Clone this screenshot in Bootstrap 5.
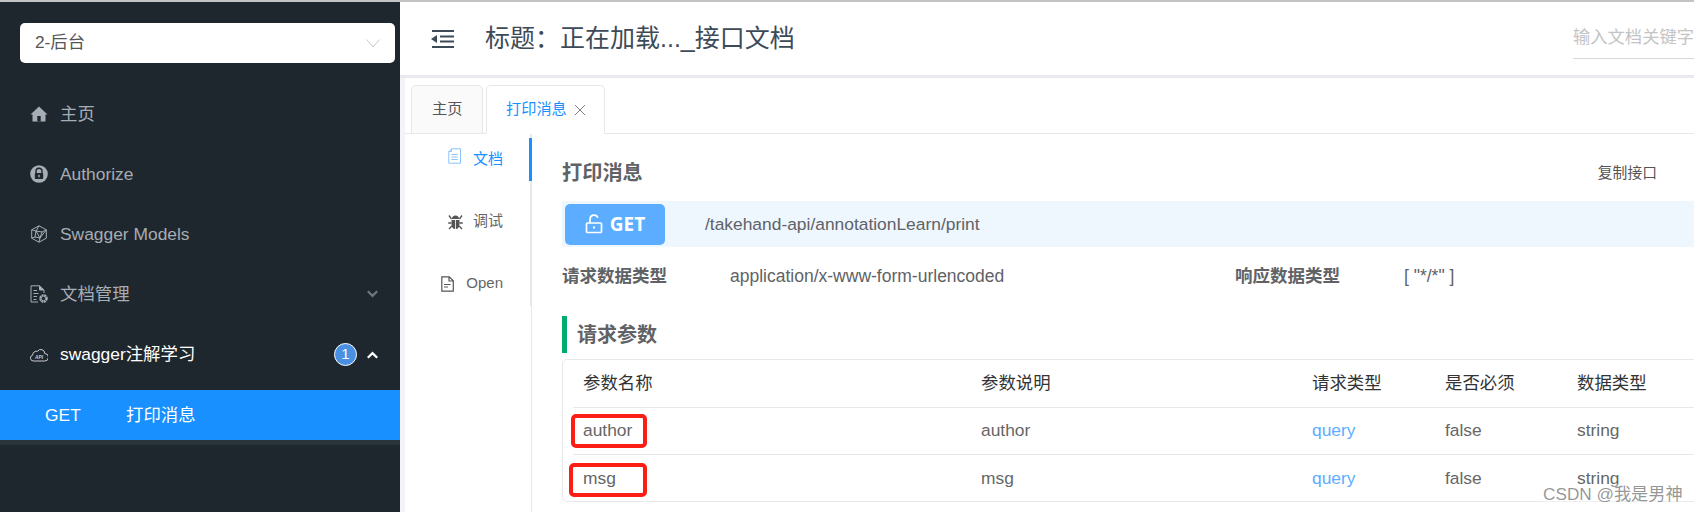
<!DOCTYPE html>
<html lang="zh-CN">
<head>
<meta charset="utf-8">
<title>接口文档</title>
<link rel="stylesheet" href="https://cdn.jsdelivr.net/npm/bootstrap@5.3.0/dist/css/bootstrap.min.css">
<style>
html,body{height:100%;margin:0}
body{font-family:"Liberation Sans","Noto Sans CJK SC",sans-serif;overflow:hidden;background:#fff;color:#606266}
.shell{height:512px;border-top:2px solid #c4c4c4;position:relative;overflow:hidden}
.side{width:400px;flex:none;background:#1f272e}
.picker{margin:21px 5px 0 20px;height:40px;padding:0 15px;background:#fff;border-radius:5px;color:#555;font-size:17.3px}
.menu-list{margin-top:21px}
.side-item{height:60px;padding:0 22px 0 30px;color:#a6adb4;font-size:17.4px;gap:12px}
.side-item svg.ico{width:18px;height:18px;flex:none}
.side-item.open{color:#fff;height:66px;padding-bottom:5px}
.count{width:23px;height:23px;border-radius:50%;background:#4a90e2;border:1.5px solid #fff;color:#fff;font-size:15px;margin-right:-2px}
.sub-item{height:50px;background:#1890ff;color:#fff;font-size:17.4px;padding-left:45px;box-shadow:0 5px 0 #2a343b}
.sub-item span:first-child{width:81px}
.work{min-width:0;overflow:hidden}
.top-bar{height:73px;flex:none;padding-left:31px}
.top-bar h1{font-size:25px;font-weight:400;color:#3d4a58;margin:0 0 0 31px;line-height:1;white-space:nowrap}
.finder{width:121px;height:40px;margin-left:auto;border-bottom:1px solid #d9d9d9;color:#c4c4c4;font-size:17.3px;line-height:36px;white-space:nowrap;overflow:hidden}
.band{height:3px;background:#e8eaf0;flex:none}
.pane{border-left:5px solid #f3f4f7;min-height:0}
.tabs-row{height:56px;flex:none;padding:7px 0 0 6px;gap:3px;border-bottom:1px solid #e8e8e8}
.tab-a{height:49px;border:1px solid #e8e8e8;border-radius:5px 5px 0 0;background:#fafafa;color:#555;font-size:15.2px;padding:0 20px;margin-bottom:-1px}
.tab-b{height:49px;width:119px;border:1px solid #e8e8e8;border-bottom-color:#fff;border-radius:5px 5px 0 0;background:#fff;color:#1890ff;font-size:15.2px;margin-bottom:-1px;gap:7px}
.tab-b svg{width:12px;height:12px}
.side-tabs{width:127px;flex:none;border-right:2px solid #e8e8e8;height:172px;position:relative;font-size:15px;color:#666}
.side-tab{height:59px;gap:12px;padding-right:27px}
.side-tab:first-child{color:#1890ff;height:50px;align-items:flex-start!important;padding-top:14px}
.side-tab svg{width:13px;height:16px;flex:none}
.side-tab.bugrow{margin-top:8px;gap:10px}
.side-tab.bugrow svg{width:15px;height:16px}
.side-tab.oprow{margin-top:3px}
.rail{position:absolute;right:-2px;top:4px;width:3px;height:43px;background:#1890ff}
.body-pane{min-width:0;padding-left:30px;margin-left:-1px;border-left:1px solid #e8e8e8;overflow:hidden}
.doc-title{height:67px;padding-right:37px;padding-top:12px;font-size:14.8px;color:#555}
.doc-title b{font-size:20.2px;color:#606266}
.method{height:46px;background:#eef6fe;padding-left:3px;font-size:17.4px;color:#606266}
.verb{width:100px;height:41px;background:#5cadff;border-radius:5px;color:#fff;font-family:"Open Sans",sans-serif;font-weight:700;font-size:19px;gap:7px;margin-right:40px}
.verb svg{width:18px;height:20px}
.facts{height:58px;font-size:17.5px}
.facts b{font-weight:700;color:#606266;white-space:nowrap}
.fa{width:168px}.fb{width:505px}.fc{width:169px}
.sect{height:37px;margin-top:11px;border-left:5px solid #00ab6b;padding-left:10px;font-size:20px;font-weight:700;color:#606266}
.param-box{margin-top:6px;width:1200px;height:143px;border:1px solid #e8e8e8;border-radius:5px;padding:0 10px}
.param-tb{table-layout:fixed;width:100%;border-collapse:collapse;font-size:17.4px;color:#666}
.param-tb td,.param-tb th{height:47px;padding:0 0 0 10px;font-weight:400;border-bottom:1px solid #e8e8e8;white-space:nowrap}
.param-tb tr:last-child td{border-bottom:0}
.param-tb th{color:#333}
.param-tb .qy{color:#5cadff}
.note{position:absolute;border:4px solid #fa1e14;border-radius:5px}
.note-a{left:571px;top:412px;width:76px;height:34px}
.note-b{left:569px;top:461px;width:78px;height:34px}
.stamp{position:absolute;left:1543px;top:482px;font-size:17.2px;color:rgba(110,110,110,.72);line-height:20px;background:rgba(255,255,255,.35)}
</style>
</head>
<body>
<div class="shell d-flex">
  <aside class="side">
    <div class="picker d-flex align-items-center justify-content-between">
      <span>2-后台</span>
      <svg width="14" height="9" viewBox="0 0 14 9" fill="none" stroke="#c6c9cf" stroke-width="1"><path d="M.5.5 7 8l6.500-7.500"/></svg>
    </div>
    <nav class="menu-list">
      <div class="side-item d-flex align-items-center">
        <svg class="ico" viewBox="0 0 18 18"><path d="M9 1.500 .5 9.500H2.500V16.500h13V9.500h2z" fill="#a6adb4"/><rect x="7.300" y="11" width="3.400" height="5.500" fill="#1f272e"/></svg>
        <span>主页</span>
      </div>
      <div class="side-item d-flex align-items-center">
        <svg class="ico" viewBox="0 0 18 18"><circle cx="9" cy="9" r="8.800" fill="#a6adb4"/><path d="M6 8V6.200a3 3 0 0 1 6 0V8" fill="none" stroke="#1f272e" stroke-width="1.400"/><rect x="4.800" y="8" width="8.400" height="6" rx=".8" fill="#1f272e"/><rect x="8.300" y="9.800" width="1.400" height="2.400" fill="#a6adb4"/></svg>
        <span>Authorize</span>
      </div>
      <div class="side-item d-flex align-items-center">
        <svg class="ico" viewBox="0 0 18 18" fill="none" stroke="#a6adb4" stroke-width="1"><path d="M9 .8 16.300 4.800v8.400L9 17.200 1.700 13.200V4.800zM9 .8 6 6 1.700 4.800M6 6l-1 6-3.300 1.200M5 12l5 1 6.300-8.200M10 13l-1 4.200M6 6l6 1 4.300-2.200M12 7l-2 6M6 6l4 7"/></svg>
        <span>Swagger Models</span>
      </div>
      <div class="side-item d-flex align-items-center">
        <svg class="ico" viewBox="0 0 18 18" fill="none" stroke="#a6adb4" stroke-width="1"><path d="M8 17H1V.8h8.500L14 5v3"/><path d="M9.500.8V5H14" fill="#a6adb4"/><path d="M3.500 5.500h3.500M3.500 8.500h5M3.500 11.500h3.500M3.500 14.500h3"/><circle cx="13.500" cy="13.500" r="3" stroke-width="2.600" stroke-dasharray="1.900 .5"/></svg>
        <span>文档管理</span>
        <svg class="ms-auto" width="11" height="8" viewBox="0 0 11 8" fill="none" stroke="#6f767c" stroke-width="2.200"><path d="m.8 1.200 4.700 4.700 4.700-4.700"/></svg>
      </div>
      <div class="side-item open d-flex align-items-center">
        <svg class="ico" viewBox="0 0 18 18" fill="none" stroke="#c9cdd1" stroke-width="1"><path d="M4 15H3.300a3 3 0 0 1-.6-5.900 3.800 3.800 0 0 1 4.800-3.800 3.900 3.900 0 0 1 7.200 2.200 3.700 3.700 0 0 1 0 7.500z"/><text x="9" y="13" text-anchor="middle" font-size="4.800" font-weight="700" font-style="italic" fill="#c9cdd1" stroke="none">API</text></svg>
        <span>swagger注解学习</span>
        <span class="count ms-auto d-flex align-items-center justify-content-center">1</span>
        <svg width="11" height="8" viewBox="0 0 11 8" fill="none" stroke="#fff" stroke-width="2.200"><path d="M.8 6.800 5.500 2.100l4.700 4.700"/></svg>
      </div>
      <div class="sub-item d-flex align-items-center"><span>GET</span><span>打印消息</span></div>
    </nav>
  </aside>
  <main class="work flex-grow-1 d-flex flex-column">
    <header class="top-bar d-flex align-items-center">
      <svg width="23" height="20" viewBox="0 0 23 20" fill="#3d4a58"><rect x="1" y="1" width="22" height="2"/><rect x="9" y="6.500" width="14" height="2"/><rect x="9" y="11.500" width="14" height="2"/><rect x="1" y="17" width="22" height="2"/><path d="M6 6v8L0 10z"/></svg>
      <h1>标题&#xFF1A;正在加载..._接口文档</h1>
      <div class="finder">输入文档关键字</div>
    </header>
    <div class="band"></div>
    <section class="pane flex-grow-1 d-flex flex-column">
      <div class="tabs-row d-flex">
        <div class="tab-a d-flex align-items-center">主页</div>
        <div class="tab-b d-flex align-items-center justify-content-center">
          <span>打印消息</span>
          <svg viewBox="0 0 12 12" fill="none" stroke="#808080" stroke-width="1"><path d="m1 1 10 10M11 1 1 11"/></svg>
        </div>
      </div>
      <div class="d-flex flex-grow-1">
        <div class="side-tabs">
          <div class="side-tab d-flex align-items-center justify-content-end">
            <svg viewBox="0 0 13 16" fill="none" stroke="#8cc4fb" stroke-width="1"><path d="M3.500.8h9v14.400H.8V3.500zM3.500.8v2.700H.8M3.300 6.500h6.500M3.300 9h6.500M3.300 11.500h6.500"/></svg>
            <span>文档</span>
          </div>
          <div class="side-tab bugrow d-flex align-items-center justify-content-end">
            <svg viewBox="0 0 15 16" fill="#555"><path d="M4 5a3.500 3.500 0 0 1 7 0z"/><path d="M3.500 6h3.600v9C5 15 3.500 13 3.500 10.500zM11.500 6H7.900v9c2.100 0 3.600-2 3.600-4.500z"/><path d="M1 1.500 3.500 5M14 1.500 11.500 5M.2 9h3.300M11.500 9h3.300M1 15l2.800-3M14 15l-2.800-3" stroke="#555" stroke-width="1.300" fill="none"/></svg>
            <span>调试</span>
          </div>
          <div class="side-tab oprow d-flex align-items-center justify-content-end">
            <svg viewBox="0 0 13 16" fill="none" stroke="#555" stroke-width="1.200"><path d="M.8.8h7.500l4 4V15.200H.8zM8 .8v4.200h4.300M3 8.500h6.500M3 11h4"/></svg>
            <span>Open</span>
          </div>
          <div class="rail"></div>
        </div>
        <div class="body-pane flex-grow-1">
          <div class="doc-title d-flex align-items-center justify-content-between"><b>打印消息</b><span>复制接口</span></div>
          <div class="method d-flex align-items-center">
            <div class="verb d-flex align-items-center justify-content-center">
              <svg viewBox="0 0 18 20" fill="none" stroke="#fff" stroke-width="1.700"><rect x="1.500" y="9" width="15" height="9.500" rx="1"/><path d="M5 9V5a4 4 0 0 1 7.800-1.200"/><path d="M9 12.500v2" stroke-width="2"/></svg>
              <span>GET</span>
            </div>
            <span>/takehand-api/annotationLearn/print</span>
          </div>
          <div class="facts d-flex align-items-center">
            <b class="fa">请求数据类型</b><span class="fb">application/x-www-form-urlencoded</span><b class="fc">响应数据类型</b><span>[ "*/*" ]</span>
          </div>
          <div class="sect d-flex align-items-center">请求参数</div>
          <div class="param-box">
            <table class="param-tb">
              <colgroup><col style="width:398px"><col style="width:331px"><col style="width:133px"><col style="width:132px"><col></colgroup>
              <tr><th>参数名称</th><th>参数说明</th><th>请求类型</th><th>是否必须</th><th>数据类型</th></tr>
              <tr><td>author</td><td>author</td><td class="qy">query</td><td>false</td><td>string</td></tr>
              <tr><td>msg</td><td>msg</td><td class="qy">query</td><td>false</td><td>string</td></tr>
            </table>
          </div>
        </div>
      </div>
    </section>
  </main>
  <div class="note note-a"></div>
  <div class="note note-b"></div>
  <div class="stamp">CSDN @我是男神</div>
</div>
<script src="https://cdn.jsdelivr.net/npm/bootstrap@5.3.0/dist/js/bootstrap.bundle.min.js"></script>
</body>
</html>
